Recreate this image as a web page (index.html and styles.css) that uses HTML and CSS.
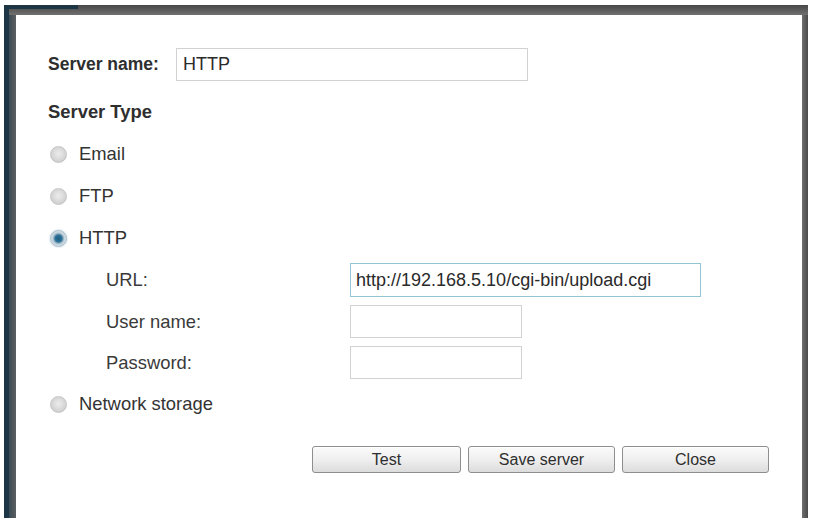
FILE: index.html
```html
<!DOCTYPE html>
<html>
<head>
<meta charset="utf-8">
<link rel="stylesheet" href="styles.css">
</head>
<body>
<div class="frame">
  <div class="content">
    <div class="row-name">
      <span class="bold-label name-label">Server name:</span>
      <div class="field field-name">HTTP</div>
    </div>
    <div class="row bold-label">Server Type</div>
    <div class="row"><span class="radio"></span><span class="opt">Email</span></div>
    <div class="row"><span class="radio"></span><span class="opt">FTP</span></div>
    <div class="row"><span class="radio checked"></span><span class="opt">HTTP</span></div>
    <div class="row sub"><span class="sub-label">URL:</span><div class="field field-url">http://192.168.5.10/cgi-bin/upload.cgi</div></div>
    <div class="row sub short"><span class="sub-label">User name:</span><div class="field field-small"></div></div>
    <div class="row sub short"><span class="sub-label">Password:</span><div class="field field-small"></div></div>
    <div class="row"><span class="radio"></span><span class="opt">Network storage</span></div>
    <div class="buttons">
      <button class="btn btn-test">Test</button>
      <button class="btn">Save server</button>
      <button class="btn">Close</button>
    </div>
  </div>
</div>
</body>
</html>
```
FILE: styles.css
```css
html, body {
  margin: 0;
  padding: 0;
  background: #ffffff;
  overflow: hidden;
}
body {
  width: 815px;
  height: 518px;
  font-family: "Liberation Sans", Arial, sans-serif;
  color: #333333;
}
.frame {
  margin: 5px 0 0 4px;
  width: 804px;
  height: 520px;
  box-sizing: border-box;
  padding: 10px 6px 0 12px;
  background:
    linear-gradient(#1d3646, #1d3646) 0 0 / 74px 4px no-repeat,
    linear-gradient(#1d3646, #1d3646) 0 0 / 5px 100% no-repeat,
    linear-gradient(#6e7073, #6e7073) 0 228px / 5px 46px no-repeat,
    linear-gradient(to bottom, #474747, #707070) 0 0 / 100% 10px no-repeat,
    linear-gradient(to right, #3a4a54, #5c6063) 5px 0 / 7px 100% no-repeat,
    linear-gradient(to right, #707070, #4a4a4a) right 0 top 0 / 6px 100% no-repeat,
    #ffffff;
}
.content {
  background: #ffffff;
  padding: 33px 0 0 32px;
  display: flex;
  flex-direction: column;
}
.row-name {
  display: flex;
  align-items: center;
  height: 33px;
  margin-bottom: 10px;
}
.bold-label {
  font-weight: bold;
  font-size: 17.5px;
  color: #2e2e2e;
}
.name-label {
  width: 128px;
}
.field {
  box-sizing: border-box;
  border: 1px solid #d2d2d2;
  background: #ffffff;
  font-size: 18px;
  color: #2a2a2a;
  display: flex;
  align-items: center;
  padding-left: 6px;
}
.field-name {
  width: 352px;
  height: 33px;
}
.row {
  display: flex;
  align-items: center;
  height: 42px;
  font-size: 18.4px;
}
.row.short {
  height: 41px;
}
.radio {
  width: 17px;
  height: 17px;
  box-sizing: border-box;
  border-radius: 50%;
  border: 1px solid #c6c6c6;
  background: radial-gradient(circle at 50% 45%, #ececec 0, #dddddd 40%, #c4c4c4 100%);
  margin-left: 2px;
  margin-right: 12px;
}
.radio.checked {
  border-color: #a8bcc8;
  background: radial-gradient(circle, #1f5e80 0, #2c729a 3.5px, #7fa3b8 4.5px, #c3d2dc 6px, #dde5ea 8px);
  box-shadow: 0 0 2px #a8c6d8;
}
.opt {
  color: #333333;
}
.sub-label {
  margin-left: 58px;
  width: 244px;
  color: #3a3a3a;
}
.field-url {
  width: 351px;
  height: 34px;
  border-color: #93c6d3;
  padding-left: 5px;
}
.field-small {
  width: 172px;
  height: 33px;
}
.buttons {
  display: flex;
  gap: 7px;
  margin-top: 21px;
  padding-left: 264px;
}
.btn {
  font-family: "Liberation Sans", Arial, sans-serif;
  font-size: 16px;
  color: #2e2e2e;
  width: 147px;
  height: 27px;
  box-sizing: border-box;
  border: 1px solid #8e8e8e;
  border-radius: 3px;
  background: linear-gradient(to bottom, #fbfbfb 0%, #efefef 50%, #dcdcdc 100%);
  box-shadow: inset 0 1px 0 #ffffff;
  padding: 0;
}
.btn-test {
  width: 149px;
}
```
